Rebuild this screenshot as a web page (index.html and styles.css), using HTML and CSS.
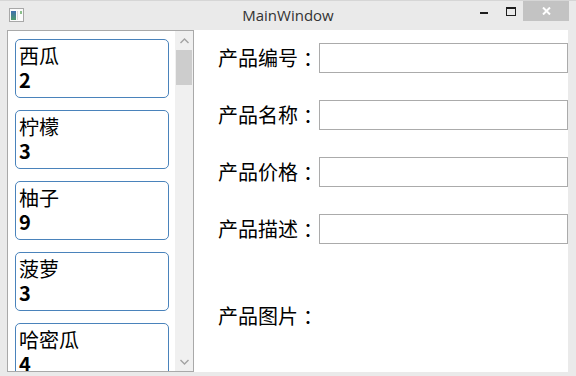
FILE: index.html
```html
<!DOCTYPE html>
<html lang="zh-CN">
<head>
    <meta charset="UTF-8">
    <title>MainWindow</title>
    <link rel="stylesheet" href="styles.css">
</head>
<body>
    <div class="window">
        <div class="titlebar">
            <div class="title-left">
                <svg class="app-icon" width="15" height="14" viewBox="0 0 15 14">
                    <defs>
                        <linearGradient id="ig" x1="0" y1="0" x2="0" y2="1">
                            <stop offset="0" stop-color="#3e6fb0"/>
                            <stop offset="1" stop-color="#4f9a6c"/>
                        </linearGradient>
                    </defs>
                    <rect x="0.5" y="0.5" width="14" height="13" fill="#fbfbfb" stroke="#a8a8a8"/>
                    <rect x="2" y="3" width="5" height="9" fill="url(#ig)"/>
                    <rect x="8" y="3" width="1" height="9" fill="#d8d8d8"/>
                    <rect x="11" y="3" width="2" height="3" fill="#8cc08c"/>
                </svg>
            </div>
            <div class="title">MainWindow</div>
            <div class="controls">
                <div class="ctl ctl-min"><span class="glyph-min"></span></div>
                <div class="ctl ctl-max"><span class="glyph-max"></span></div>
                <div class="ctl ctl-close">
                    <svg width="9" height="8" viewBox="0 0 9 8">
                        <path d="M1 0.5 L8 7.5 M8 0.5 L1 7.5" stroke="#ffffff" stroke-width="2"/>
                    </svg>
                </div>
            </div>
        </div>

        <div class="client">
            <div class="listbox">
                <div class="list-items">
                    <div class="card">
                        <div class="card-name">西瓜</div>
                        <div class="card-count">2</div>
                    </div>
                    <div class="card">
                        <div class="card-name">柠檬</div>
                        <div class="card-count">3</div>
                    </div>
                    <div class="card">
                        <div class="card-name">柚子</div>
                        <div class="card-count">9</div>
                    </div>
                    <div class="card">
                        <div class="card-name">菠萝</div>
                        <div class="card-count">3</div>
                    </div>
                    <div class="card">
                        <div class="card-name">哈密瓜</div>
                        <div class="card-count">4</div>
                    </div>
                </div>
                <div class="scrollbar">
                    <div class="sb-btn">
                        <svg width="9" height="6" viewBox="0 0 9 6">
                            <polyline points="0.5,5 4.5,1 8.5,5" fill="none" stroke="#a3a3a3" stroke-width="1.4"/>
                        </svg>
                    </div>
                    <div class="sb-track">
                        <div class="sb-thumb"></div>
                    </div>
                    <div class="sb-btn">
                        <svg width="9" height="6" viewBox="0 0 9 6">
                            <polyline points="0.5,1 4.5,5 8.5,1" fill="none" stroke="#a3a3a3" stroke-width="1.4"/>
                        </svg>
                    </div>
                </div>
            </div>

            <div class="form">
                <div class="row">
                    <label class="label">产品编号<span class="colon">：</span></label>
                    <input class="field" type="text">
                </div>
                <div class="row">
                    <label class="label">产品名称<span class="colon">：</span></label>
                    <input class="field" type="text">
                </div>
                <div class="row">
                    <label class="label">产品价格<span class="colon">：</span></label>
                    <input class="field" type="text">
                </div>
                <div class="row">
                    <label class="label">产品描述<span class="colon">：</span></label>
                    <input class="field" type="text">
                </div>
                <div class="row row-image">
                    <label class="label">产品图片<span class="colon">：</span></label>
                </div>
            </div>
        </div>
    </div>
</body>
</html>
```

FILE: styles.css
```css
* {
    margin: 0;
    padding: 0;
    box-sizing: border-box;
}

body {
    width: 576px;
    height: 376px;
    overflow: hidden;
    background-color: #eaeaea;
    font-family: "Noto Sans CJK SC", sans-serif;
    color: #000000;
}

.window {
    height: 376px;
    display: flex;
    flex-direction: column;
    border-top: 1px solid #d6d6d6;
}

/* title bar */

.titlebar {
    height: 29px;
    display: grid;
    grid-template-columns: 1fr auto 1fr;
    align-items: start;
}

.title-left {
    padding: 7px 0 0 9px;
}

.app-icon {
    display: block;
}

.title {
    font-family: "Open Sans", sans-serif;
    font-size: 15px;
    line-height: 30px;
    margin-top: -1px;
    color: #333333;
}

.controls {
    display: flex;
    justify-content: flex-end;
    padding-right: 7px;
}

.ctl {
    height: 20px;
    display: flex;
    align-items: center;
    justify-content: center;
}

.ctl-min {
    width: 26px;
    align-items: flex-start;
    padding-top: 11px;
}

.glyph-min {
    display: block;
    width: 8px;
    height: 2px;
    background-color: #1e1e1e;
    margin-right: 2px;
}

.ctl-max {
    width: 25px;
    align-items: flex-start;
    padding-top: 6px;
}

.glyph-max {
    display: block;
    width: 10px;
    height: 9px;
    border: 1px solid #1e1e1e;
    border-top-width: 2px;
}

.ctl-close {
    width: 46px;
    background-color: #c3c3c3;
}

.ctl-close svg {
    display: block;
}

/* client area */

.client {
    flex: 1;
    display: flex;
    margin: 0 8px 4px 7px;
    background-color: #ffffff;
    overflow: hidden;
}

.listbox {
    width: 187px;
    display: flex;
    border: 1px solid #a9a9a9;
    overflow: hidden;
}

.list-items {
    width: 167px;
    padding: 8px 6px 0 7px;
    display: flex;
    flex-direction: column;
    gap: 12px;
    overflow: hidden;
}

.card {
    flex-shrink: 0;
    height: 59px;
    border: 1px solid #4a83bb;
    border-radius: 5px;
    padding: 4px 3px 5px 3px;
    font-size: 20px;
    line-height: 24px;
}

.card-count {
    font-weight: 700;
}

.scrollbar {
    width: 18px;
    background-color: #f0f0f0;
    display: flex;
    flex-direction: column;
}

.sb-btn {
    height: 19px;
    display: flex;
    align-items: center;
    justify-content: center;
}

.sb-btn svg {
    display: block;
}

.sb-track {
    flex: 1;
    padding: 0 1px;
}

.sb-thumb {
    height: 35px;
    background-color: #cdcdcd;
}

/* form */

.form {
    flex: 1;
    padding-top: 13px;
    display: flex;
    flex-direction: column;
    gap: 27px;
}

.row {
    height: 30px;
    display: flex;
    align-items: center;
    padding-left: 24px;
}

.row-image {
    margin-top: 30px;
}

.label {
    width: 100px;
    flex-shrink: 0;
    font-size: 20px;
    line-height: 30px;
    white-space: nowrap;
}

.colon {
    padding-left: 5px;
}

.field {
    flex: 1;
    min-width: 0;
    height: 30px;
    margin-left: 1px;
    border: 1px solid #ababab;
    background-color: #ffffff;
    outline: none;
}
```
